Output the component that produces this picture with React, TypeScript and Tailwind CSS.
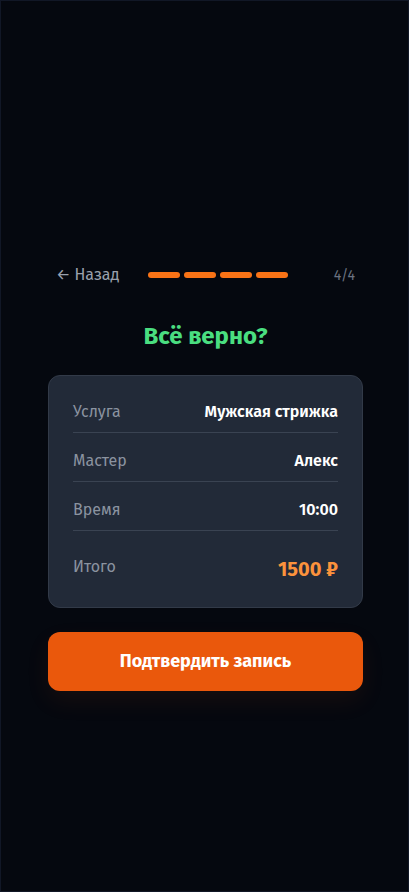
import React from "react";

const rows = [
  { label: "Услуга", value: "Мужская стрижка" },
  { label: "Мастер", value: "Алекс" },
  { label: "Время", value: "10:00" },
];

export default function App() {
  return (
    <div
      className="min-h-screen w-full bg-[#05080f] border border-[#111726] text-white"
      style={{ fontFamily: '"Fira Sans", Roboto, "Noto Sans", sans-serif' }}
    >
      <div className="ml-[47px] w-[315px] pt-[264px]">
        {/* шапка с прогрессом */}
        <div className="flex items-center px-2 h-5">
          <button className="flex items-center gap-1 text-[16px] text-[#9aa1ad]">
            <span className="text-[16px] leading-5">←</span>
            <span>Назад</span>
          </button>
          <div className="ml-[29px] flex gap-1">
            <span className="w-8 h-1.5 rounded-full bg-[#f97316]" />
            <span className="w-8 h-1.5 rounded-full bg-[#f97316]" />
            <span className="w-8 h-1.5 rounded-full bg-[#f97316]" />
            <span className="w-8 h-1.5 rounded-full bg-[#f97316]" />
          </div>
          <span className="ml-auto text-[14px] text-[#6b7280]">4/4</span>
        </div>

        <h1 className="mt-[35px] text-center text-[24px] leading-8 font-bold text-[#4ade80]">
          Всё верно?
        </h1>

        {/* карточка с деталями */}
        <div className="mt-[23px] rounded-xl border border-[#323a48] bg-[#222a38] px-6 py-6">
          <div className="flex flex-col gap-4">
            {rows.map((r) => (
              <div
                key={r.label}
                className="flex items-center justify-between pb-2 border-b border-[#3a4352] text-[16px] leading-6"
              >
                <span className="text-[#8b93a0]">{r.label}</span>
                <span className="font-semibold text-white">{r.value}</span>
              </div>
            ))}
            <div className="flex items-center justify-between pt-2">
              <span className="text-[16px] leading-6 -mt-1 text-[#8b93a0]">Итого</span>
              <span className="text-[20px] leading-7 font-bold text-[#fb923c]">1500 ₽</span>
            </div>
          </div>
        </div>

        <button className="mt-6 w-full h-[59px] rounded-xl bg-[#ea580c] text-[18px] font-bold text-white shadow-[0_10px_24px_rgba(234,88,12,0.08)]">
          Подтвердить запись
        </button>
      </div>
    </div>
  );
}
